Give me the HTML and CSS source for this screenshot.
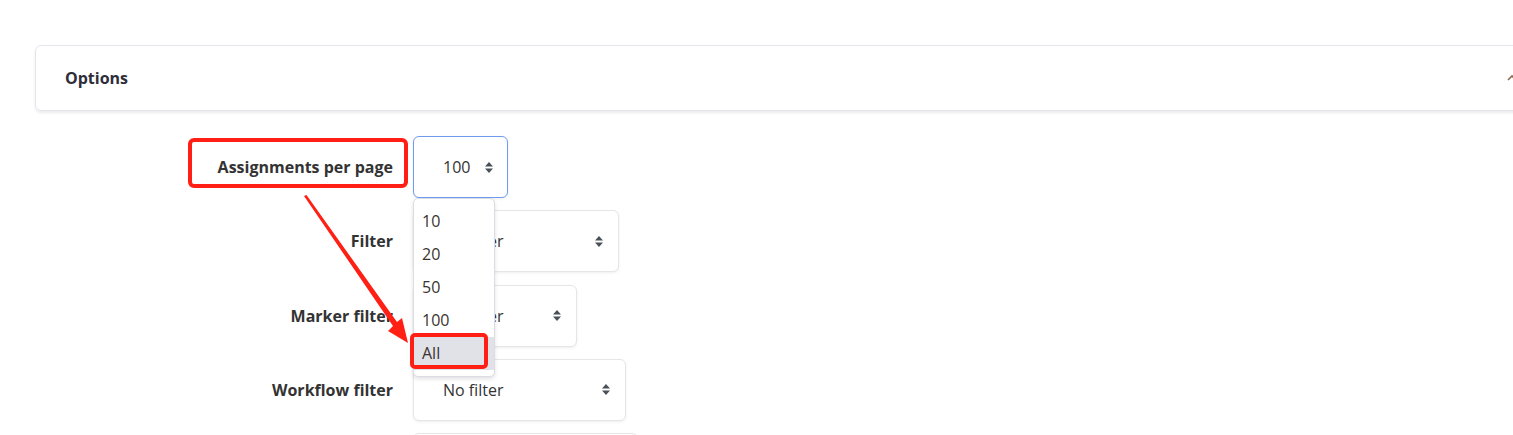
FILE: index.html
```html
<!DOCTYPE html>
<html lang="en">
<head>
    <meta charset="UTF-8">
    <title>Grading options</title>
    <link rel="stylesheet" href="styles.css">
</head>
<body>
    <div class="page">
        <div class="card">
            <h3 class="card-title">Options</h3>
            <span class="collapse-icon">
                <svg width="10" height="10" viewBox="0 0 10 10"><path d="M1 7 L5 3 L9 7" fill="none" stroke="#8a6a50" stroke-width="1.6"/></svg>
            </span>
        </div>

        <form class="options-form">
            <label class="form-label">Assignments per page</label>
            <div class="select-wrap">
                <div class="select select-focus w-perpage">
                    <span>100</span>
                    <svg class="caret" width="8" height="11" viewBox="0 0 8 11"><path d="M4 0 L8 4.5 H0 Z M0 6.5 H8 L4 11 Z" fill="#495057"/></svg>
                </div>
                <ul class="dropdown">
                    <li>10</li>
                    <li>20</li>
                    <li>50</li>
                    <li>100</li>
                    <li class="active">All</li>
                </ul>
            </div>

            <label class="form-label">Filter</label>
            <div class="select w-filter">
                <span>No filter</span>
                <svg class="caret" width="8" height="11" viewBox="0 0 8 11"><path d="M4 0 L8 4.5 H0 Z M0 6.5 H8 L4 11 Z" fill="#495057"/></svg>
            </div>

            <label class="form-label">Marker filter</label>
            <div class="select w-marker">
                <span>No filter</span>
                <svg class="caret" width="8" height="11" viewBox="0 0 8 11"><path d="M4 0 L8 4.5 H0 Z M0 6.5 H8 L4 11 Z" fill="#495057"/></svg>
            </div>

            <label class="form-label">Workflow filter</label>
            <div class="select w-workflow">
                <span>No filter</span>
                <svg class="caret" width="8" height="11" viewBox="0 0 8 11"><path d="M4 0 L8 4.5 H0 Z M0 6.5 H8 L4 11 Z" fill="#495057"/></svg>
            </div>

            <label class="form-label"></label>
            <div class="select w-last"></div>
        </form>

        <!-- screenshot annotations drawn over the form -->
        <svg class="annotations" width="1513" height="435" viewBox="0 0 1513 435">
            <rect x="190" y="140" width="216" height="46" rx="4" fill="none" stroke="#ff1f14" stroke-width="4"/>
            <rect x="412" y="335" width="74" height="32" rx="3" fill="none" stroke="#ff1f14" stroke-width="4"/>
            <polygon points="304,196 306.5,195 397,322 402,318 408,343 388,331 393,326" fill="#ff1f14"/>
        </svg>
    </div>
</body>
</html>
```

FILE: styles.css
```css
body {
    margin: 0;
    background: #fff;
    font-family: "Open Sans", "Noto Sans", sans-serif;
    font-size: 16px;
    color: #333;
    overflow: hidden;
}

.page {
    position: relative;
    height: 435px;
    padding-top: 45px;
    box-sizing: border-box;
    overflow: hidden;
}

.card {
    display: flex;
    align-items: center;
    justify-content: space-between;
    height: 66px;
    margin-left: 35px;
    margin-right: -40px;
    padding: 0 35px 0 29px;
    box-sizing: border-box;
    border: 1px solid #e4e4ec;
    border-radius: 6px;
    box-shadow: 0 2px 3px rgba(0, 0, 0, 0.08);
}

.card-title {
    margin: 0;
    font-size: 16px;
    font-weight: 700;
    color: #2e2e3a;
}

.collapse-icon {
    display: flex;
    width: 10px;
    height: 10px;
}

.options-form {
    display: grid;
    grid-template-columns: 393px auto;
    column-gap: 20px;
    row-gap: 12.3px;
    margin-top: 25px;
}

.form-label {
    align-self: center;
    text-align: right;
    font-weight: 700;
    color: #333;
}

.select-wrap {
    position: relative;
    justify-self: start;
}

.select {
    justify-self: start;
    display: flex;
    align-items: center;
    height: 62px;
    padding: 0 15px 0 29px;
    box-sizing: border-box;
    border: 1px solid #e6e6e6;
    border-radius: 6px;
    box-shadow: 0 1px 3px rgba(0, 0, 0, 0.07);
    background: #fff;
    color: #333;
}

.select .caret {
    margin-left: auto;
}

.select-focus {
    border-color: #6f9cf0;
    padding-right: 14px;
}

.w-perpage { width: 95px; }
.w-filter { width: 206px; }
.w-marker { width: 164px; }
.w-workflow { width: 213px; }
.w-last { width: 225px; }

.dropdown {
    position: absolute;
    top: 62px;
    left: 0;
    width: 82px;
    margin: 0;
    padding: 6px 0;
    list-style: none;
    background: #fff;
    border: 1px solid #dcdce4;
    border-radius: 5px;
    box-shadow: 0 2px 4px rgba(0, 0, 0, 0.12);
    box-sizing: border-box;
    z-index: 2;
}

.dropdown li {
    height: 33px;
    line-height: 33px;
    padding-left: 8px;
    color: #3a3330;
}

.dropdown li.active {
    background: #e1e1e8;
}

.annotations {
    position: absolute;
    top: 0;
    left: 0;
    z-index: 3;
    pointer-events: none;
}
```
